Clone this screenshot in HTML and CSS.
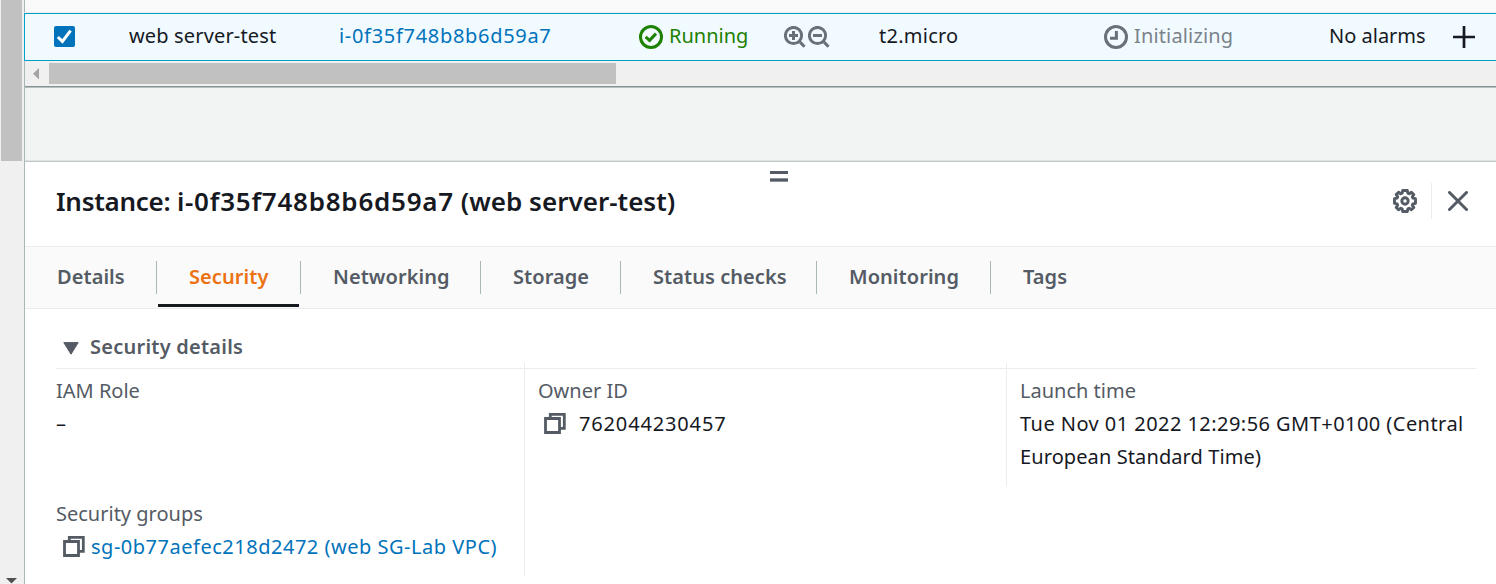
FILE: index.html
```html
<!DOCTYPE html>
<html lang="en">
<head>
<meta charset="utf-8">
<title>Instances</title>
<link rel="stylesheet" href="styles.css">
</head>
<body>
<div class="app">
  <div class="vscroll">
    <div class="vthumb"></div>
    <svg class="varrow" width="12" height="6" viewBox="0 0 12 6"><path d="M0 0H11L5.5 5.5Z" fill="#505050"/></svg>
  </div>
  <main class="main">
    <div class="table-head"></div>
    <div class="row">
      <svg class="check" width="21" height="21" viewBox="0 0 21 21"><rect width="21" height="21" rx="2" fill="#0073bb"/><path d="M3.8 11 8.4 15.4 16.6 4.6" fill="none" stroke="#fff" stroke-width="3"/></svg>
      <span class="t name">web server-test</span>
      <span class="t link iid">i-0f35f748b8b6d59a7</span>
      <span class="cell ok"><svg width="24" height="24" viewBox="0 0 24 24" fill="none" stroke="currentColor"><circle cx="12" cy="12" r="10.5" stroke-width="3"/><path d="M6.6 11.8 10.6 15.4 17 8.6" stroke-width="3"/></svg><span class="t running">Running</span></span>
      <span class="cell mags">
        <svg width="23" height="23" viewBox="0 0 23 23" fill="none" stroke="currentColor" stroke-width="3"><circle cx="9.5" cy="9.5" r="8.1"/><path d="M15 15 20.5 20.8M5 9.5H14M9.5 5V14"/></svg>
        <svg width="23" height="23" viewBox="0 0 23 23" fill="none" stroke="currentColor" stroke-width="3"><circle cx="9.5" cy="9.5" r="8.1"/><path d="M15 15 20.5 20.8M5 9.5H14"/></svg>
      </span>
      <span class="t type">t2.micro</span>
      <span class="cell pending"><svg width="24" height="24" viewBox="0 0 24 24" fill="none" stroke="currentColor"><circle cx="12" cy="12" r="10.5" stroke-width="3"/><path d="M12.4 6V13.2H6" stroke-width="3"/></svg><span class="t init">Initializing</span></span>
      <span class="t alarms">No alarms</span>
      <svg class="plus" width="22" height="22" viewBox="0 0 22 22"><path d="M0 11H22M11 0V22" stroke="#16191f" stroke-width="2.7"/></svg>
    </div>
    <div class="hscroll">
      <svg width="6" height="12" viewBox="0 0 6 12"><path d="M6 0V11.5L0 5.75Z" fill="#a3a3a3"/></svg>
      <div class="hthumb"></div>
    </div>
    <div class="gap"></div>
    <section class="panel">
      <header class="head">
        <div class="grip"><i></i><i></i></div>
        <h1 class="t title"><span class="kind">Instance: </span><span class="ident">i-0f35f748b8b6d59a7</span> (web server-test)</h1>
        <div class="tools">
          <svg width="24" height="24" viewBox="0 0 24 24" fill="none" stroke="#545b64" stroke-width="2.9" stroke-linejoin="round"><path d="M9.7 1.5H14.3L14.8 4.1 16.2 4.7 18.4 3.2 20.8 5.6 19.3 7.8 19.9 9.2 22.5 9.7V14.3L19.9 14.8 19.3 16.2 20.8 18.4 18.4 20.8 16.2 19.3 14.8 19.9 14.3 22.5H9.7L9.2 19.9 7.8 19.3 5.6 20.8 3.2 18.4 4.7 16.2 4.1 14.8 1.5 14.3V9.7L4.1 9.2 4.7 7.8 3.2 5.6 5.6 3.2 7.8 4.7 9.2 4.1Z"/><circle cx="12" cy="12" r="3.2"/></svg>
          <span class="rule"></span>
          <svg width="20" height="20" viewBox="0 0 20 20"><path d="M1.5 1.5 18.5 18.5M18.5 1.5 1.5 18.5" stroke="#545b64" stroke-width="3" stroke-linecap="round"/></svg>
        </div>
      </header>
      <nav class="tabs">
        <a class="tab t1"><span class="t">Details</span></a>
        <a class="tab t2 active"><span class="t">Security</span></a>
        <a class="tab t3"><span class="t">Networking</span></a>
        <a class="tab t4"><span class="t">Storage</span></a>
        <a class="tab t5"><span class="t">Status checks</span></a>
        <a class="tab t6"><span class="t">Monitoring</span></a>
        <a class="tab t7"><span class="t">Tags</span></a>
      </nav>
      <div class="body">
        <h2 class="section"><svg width="16" height="13" viewBox="0 0 16 13"><path d="M.8 .6H15.2L8 12.2Z" fill="#545b64" stroke="#545b64" stroke-linejoin="round"/></svg><span class="t sectitle">Security details</span></h2>
        <div class="cols">
          <div class="col c1">
            <div class="label"><span class="t iam">IAM Role</span></div>
            <div class="value dash"><span class="t">–</span></div>
            <div class="label groups"><span class="t sgs">Security groups</span></div>
            <div class="value copy"><svg width="22" height="21" viewBox="0 0 22 21" fill="none" stroke="#545b64" stroke-width="2.8"><path d="M1.5 5.5H15.5V19.5H1.5ZM6.3 5V1.4H20.3V15.3H16"/></svg><span class="t link sg">sg-0b77aefec218d2472 (web SG-Lab VPC)</span></div>
          </div>
          <div class="col c2">
            <div class="label"><span class="t owner">Owner ID</span></div>
            <div class="value copy own"><svg width="22" height="21" viewBox="0 0 22 21" fill="none" stroke="#545b64" stroke-width="2.8"><path d="M1.5 5.5H15.5V19.5H1.5ZM6.3 5V1.4H20.3V15.3H16"/></svg><span class="t num">762044230457</span></div>
          </div>
          <div class="col c3">
            <div class="label"><span class="t launch">Launch time</span></div>
            <div class="value"><span class="t time1">Tue Nov 01 2022 12:29:56 GMT+0100 (Central</span></div>
            <div class="value"><span class="t time2">European Standard Time)</span></div>
          </div>
        </div>
      </div>
    </section>
  </main>
</div>
</body>
</html>
```
FILE: styles.css
```css
* { box-sizing: border-box; }
body { margin: 0; font: 20px/33px "Noto Sans", "Open Sans", sans-serif; color: #16191f; background: #fff; }
h1, h2 { margin: 0; font-weight: 600; }
svg { display: block; flex: none; }
.t { white-space: nowrap; }
.app { display: flex; width: 1496px; height: 584px; overflow: hidden; }
.vscroll { width: 24px; flex: none; background: #f0f0f0; display: flex; flex-direction: column; justify-content: space-between; }
.vthumb { width: 21px; height: 161px; margin-left: 1px; background: #c1c1c1; }
.varrow { margin-left: 6px; }
.main { flex: 1; min-width: 0; display: flex; flex-direction: column; }
.table-head { height: 13px; background: #fafafa; border-bottom: 1px solid #eaeded; border-left: 1px solid #aab7b8; }
.row { height: 48px; border: 1px solid #00a1c9; border-right: 0; background: #f1faff; padding-left: 29px; display: grid; grid-template-columns: 75px 210px 300px 145px 95px 225px 225px 124px 1fr; align-items: center; }
.row .t { padding-bottom: 4px; }
.check { margin-bottom: 1px; }
.cell { display: flex; align-items: center; gap: 6px; }
.ok { color: #1d8102; }
.mags { color: #687078; gap: 1px; }
.pending { color: #687078; }
.init { color: #7b838b; letter-spacing: .15px; }
.link { color: #0073bb; }
.name { letter-spacing: .15px; }
.iid { letter-spacing: .69px; }
.type { letter-spacing: .25px; }
.hscroll { height: 27px; background: #f0f0f0; border-left: 1px solid #aab7b8; border-bottom: 1px solid #b5bdbd; box-shadow: inset 0 -1px #879596; padding: 2px 0 0 8px; display: flex; }
.hscroll svg { margin-top: 5px; }
.hthumb { width: 567px; height: 21px; margin-left: 10px; background: #c1c1c1; }
.gap { height: 74px; background: #f2f3f3; border-left: 1px solid #aab7b8; border-bottom: 1px solid #bfc7c7; box-shadow: inset 0 -1px #dfe2e2; }
.panel { flex: 1; border-left: 1px solid #aab7b8; background: #fff; display: flex; flex-direction: column; }
.head { height: 85px; border-bottom: 1px solid #eaeded; position: relative; padding: 0 28px 7px 31px; display: flex; align-items: center; justify-content: space-between; }
.grip { position: absolute; left: 745px; top: 9px; width: 18px; }
.grip i { display: block; height: 3px; margin-bottom: 4px; background: #545b64; }
.grip i + i { height: 4px; border: solid #8d9299; border-width: 1px 0; }
.title { font-size: 26px; letter-spacing: .02px; padding-top: 2px; }
.kind { letter-spacing: -.27px; }
.ident { letter-spacing: .76px; }
.tools { display: flex; align-items: center; }
.rule { width: 1px; height: 36px; background: #eaeded; margin: 0 16px 0 14px; }
.tabs { height: 62px; background: #fafafa; border-bottom: 1px solid #eaeded; display: flex; font-weight: 600; color: #545b64; }
.tab { display: flex; align-items: center; position: relative; padding: 0 0 2px 32px; height: 60px; letter-spacing: .06px; }
.tab + .tab::before { content: ""; position: absolute; left: -1px; top: 14px; height: 33px; width: 1px; background: #aab7b8; }
.t1 { width: 132px; }
.t2 { width: 144px; }
.t3 { width: 180px; }
.t4 { width: 140px; }
.t5 { width: 196px; }
.t6 { width: 174px; }
.active { color: #ec7211; }
.active::after { content: ""; position: absolute; left: 1px; right: 2px; bottom: 0; height: 3px; background: #16191f; }
.body { padding: 21px 20px 0 31px; }
.section { font-size: 20px; height: 39px; border-bottom: 1px solid #eaeded; padding-left: 7px; display: flex; align-items: flex-start; gap: 11px; color: #545b64; }
.section svg { margin-top: 12px; }
.sectitle { letter-spacing: .24px; }
.cols { display: grid; grid-template-columns: 468px 482px 1fr; align-items: start; margin-top: -6px; }
.col { padding-top: 11px; }
.c1 { height: 213px; }
.c2 { height: 213px; border-left: 1px solid #eaeded; padding-left: 13px; }
.c3 { height: 124px; border-left: 1px solid #eaeded; padding-left: 13px; }
.label { color: #545b64; height: 33px; }
.value { height: 33px; }
.groups { margin-top: 57px; }
.copy { display: flex; align-items: center; gap: 6px; padding-left: 7px; }
.own { padding-left: 6px; gap: 13px; }
.sg { letter-spacing: .51px; }
.num { letter-spacing: .85px; }
.time1 { letter-spacing: .45px; }
.time2 { letter-spacing: .1px; }
```
